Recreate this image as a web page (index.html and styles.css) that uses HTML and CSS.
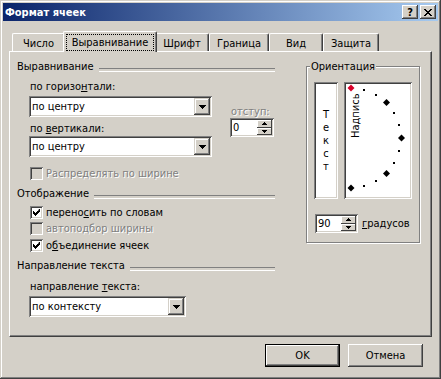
FILE: index.html
```html
<!DOCTYPE html>
<html lang="ru">
<head>
    <meta charset="UTF-8">
    <title>Формат ячеек</title>
    <link rel="stylesheet" href="styles.css">
</head>
<body>
    <div class="window">
        <!-- Title bar -->
        <div class="titlebar">
            <span class="title">Формат ячеек</span>
            <span class="caption-btn help">?</span>
            <span class="caption-btn">
                <svg width="8" height="7" viewBox="0 0 8 7"><path d="M0 0h2v1h1v1h2v-1h1v-1h2v1h-1v1h-1v1h-1v1h1v1h1v1h1v1h-2v-1h-1v-1h-2v1h-1v1h-2v-1h1v-1h1v-1h1v-1h-1v-1h-1v-1h-1z"/></svg>
            </span>
        </div>

        <div class="dialog">
            <div class="tabs">
                <div class="tab tab-number">Число</div>
                <div class="tab tab-align active"><span class="focus">Выравнивание</span></div>
                <div class="tab tab-font">Шрифт</div>
                <div class="tab tab-border">Граница</div>
                <div class="tab tab-view">Вид</div>
                <div class="tab tab-protect">Защита</div>
            </div>

            <div class="panel">
                <div class="left">
                    <div class="group-title">Выравнивание</div>
                    <div class="align-row">
                        <div class="align-fields">
                            <div class="label">по горизо<u>н</u>тали:</div>
                            <div class="combo combo-wide">
                                <span class="value">по центру</span>
                                <span class="drop"><svg width="7" height="4" viewBox="0 0 7 4"><path d="M0 0h7v1h-1v1h-1v1h-1v1h-1v-1h-1v-1h-1v-1h-1z"/></svg></span>
                            </div>
                            <div class="label label-second">по <u>в</u>ертикали:</div>
                            <div class="combo combo-wide combo-second">
                                <span class="value">по центру</span>
                                <span class="drop"><svg width="7" height="4" viewBox="0 0 7 4"><path d="M0 0h7v1h-1v1h-1v1h-1v1h-1v-1h-1v-1h-1v-1h-1z"/></svg></span>
                            </div>
                        </div>
                        <div class="indent">
                            <div class="label disabled">отступ:</div>
                            <div class="spin spin-indent">
                                <span class="value">0</span>
                                <span class="spin-btns">
                                    <span class="spin-btn"><svg width="5" height="3" viewBox="0 0 5 3"><path d="M2 0h1v1h1v1h1v1h-5v-1h1v-1h1z"/></svg></span>
                                    <span class="spin-btn"><svg width="5" height="3" viewBox="0 0 5 3"><path d="M0 0h5v1h-1v1h-1v1h-1v-1h-1v-1h-1z"/></svg></span>
                                </span>
                            </div>
                        </div>
                    </div>

                    <div class="check check-justify disabled">
                        <span class="box"></span>Распределять по ширине
                    </div>

                    <div class="group-title group-display">Отображение</div>
                    <div class="check check-wrap">
                        <span class="box"><svg width="7" height="7" viewBox="0 0 7 7"><path d="M6 0h1v3h-1v1h-1v1h-1v1h-1v1h-1v-1h-1v-1h-1v-3h1v1h1v1h1v-1h1v-1h1z"/></svg></span>
                        перено<u>с</u>ить по словам
                    </div>
                    <div class="check check-fit disabled">
                        <span class="box"></span>автоподбор ширины
                    </div>
                    <div class="check check-merge">
                        <span class="box"><svg width="7" height="7" viewBox="0 0 7 7"><path d="M6 0h1v3h-1v1h-1v1h-1v1h-1v1h-1v-1h-1v-1h-1v-3h1v1h1v1h1v-1h1v-1h1z"/></svg></span>
                        о<u>б</u>ъединение ячеек
                    </div>

                    <div class="group-title group-direction">Направление текста</div>
                    <div class="label label-direction">направление <u>т</u>екста:</div>
                    <div class="combo combo-narrow">
                        <span class="value">по контексту</span>
                        <span class="drop"><svg width="7" height="4" viewBox="0 0 7 4"><path d="M0 0h7v1h-1v1h-1v1h-1v1h-1v-1h-1v-1h-1v-1h-1z"/></svg></span>
                    </div>
                </div>

                <fieldset class="orient">
                    <legend>Ориентация</legend>
                    <div class="orient-boxes">
                        <div class="text-box">
                            <span>Т</span><span>е</span><span>к</span><span>с</span><span>т</span>
                        </div>
                        <div class="dial-box">
                            <svg class="dial" width="64" height="113" viewBox="0 0 64 113">
                                <text class="dial-text" transform="translate(13 54) rotate(-90)">Надпись</text>
                                <path fill="#d8002a" d="M5 0.5l3.5 3.5l-3.5 3.5l-3.5 -3.5z"/>
                                <rect x="17" y="5" width="2" height="2"/>
                                <rect x="29" y="10" width="2" height="2"/>
                                <path d="M40.5 15l3.5 3.5l-3.5 3.5l-3.5 -3.5z"/>
                                <rect x="47" y="28" width="2" height="2"/>
                                <rect x="52" y="40" width="2" height="2"/>
                                <path d="M55.5 50.5l3.5 3.5l-3.5 3.5l-3.5 -3.5z"/>
                                <rect x="52" y="66" width="2" height="2"/>
                                <rect x="47" y="78" width="2" height="2"/>
                                <path d="M40.5 86l3.5 3.5l-3.5 3.5l-3.5 -3.5z"/>
                                <rect x="29" y="96" width="2" height="2"/>
                                <rect x="17" y="101" width="2" height="2"/>
                                <path d="M5 100.5l3.5 3.5l-3.5 3.5l-3.5 -3.5z"/>
                            </svg>
                        </div>
                    </div>
                    <div class="deg-row">
                        <div class="spin spin-deg">
                            <span class="value">90</span>
                            <span class="spin-btns">
                                <span class="spin-btn"><svg width="5" height="3" viewBox="0 0 5 3"><path d="M2 0h1v1h1v1h1v1h-5v-1h1v-1h1z"/></svg></span>
                                <span class="spin-btn"><svg width="5" height="3" viewBox="0 0 5 3"><path d="M0 0h5v1h-1v1h-1v1h-1v-1h-1v-1h-1z"/></svg></span>
                            </span>
                        </div>
                        <span class="deg-label"><u>г</u>радусов</span>
                    </div>
                </fieldset>
            </div>

            <div class="buttons">
                <button type="button" class="btn default">OK</button>
                <button type="button" class="btn">Отмена</button>
            </div>
        </div>
    </div>
</body>
</html>
```

FILE: styles.css
```css
/* Reset */
* {
    margin: 0;
    padding: 0;
    box-sizing: border-box;
}

body {
    font-family: "DejaVu Sans Condensed", "DejaVu Sans", sans-serif;
    font-size: 11px;
    line-height: 13px;
    color: #000;
    background: #d4d0c8;
}

u {
    text-decoration: underline;
    text-underline-offset: 1px;
}

/* Window frame */
.window {
    width: 441px;
    height: 379px;
    padding: 3px;
    background: #d4d0c8;
    box-shadow: inset -1px -1px #404040, inset 1px 1px #d4d0c8, inset -2px -2px #808080, inset 2px 2px #fff;
}

.titlebar {
    height: 18px;
    display: flex;
    align-items: center;
    padding: 0 2px 0 2px;
    background: linear-gradient(to right, #0a246a, #a6caf0);
    color: #fff;
    font-weight: bold;
}

.title {
    flex: 1;
}

.caption-btn {
    width: 16px;
    height: 14px;
    display: flex;
    align-items: center;
    justify-content: center;
    background: #d4d0c8;
    color: #000;
    font-size: 11px;
    box-shadow: inset -1px -1px #404040, inset 1px 1px #fff, inset -2px -2px #808080;
}

.caption-btn.help {
    margin-right: 2px;
}

/* Tabs */
.dialog {
    padding: 0 6px;
}

.tabs {
    display: flex;
    align-items: flex-end;
    height: 20px;
    margin-top: 10px;
    padding-left: 3px;
}

.tab {
    height: 18px;
    display: flex;
    align-items: center;
    justify-content: center;
    padding-top: 1px;
    border-top: 1px solid #fff;
    border-left: 1px solid #fff;
    border-right: 1px solid #404040;
    border-radius: 2px 2px 0 0;
    box-shadow: inset -1px 0 #808080;
}

.tab-number { width: 53px; }
.tab-font { width: 54px; }
.tab-border { width: 60px; }
.tab-view { width: 54px; }
.tab-protect { width: 56px; }

.tab.active {
    width: 94px;
    height: 21px;
    margin: 0 -2px -1px;
    padding-top: 0;
    position: relative;
    z-index: 1;
    background: #d4d0c8;
}

.focus {
    padding: 1px 5px;
    border: 1px dotted #000;
}

/* Tab page */
.panel {
    height: 286px;
    display: flex;
    align-items: flex-start;
    padding: 8px 0 0 7px;
    border: 1px solid #fff;
    border-right-color: #404040;
    border-bottom-color: #404040;
    box-shadow: inset -1px -1px #808080;
}

.left {
    width: 258px;
}

.group-title {
    display: flex;
    gap: 5px;
    height: 13px;
}

.group-title::after {
    content: "";
    flex: 1;
    height: 2px;
    margin-top: 8px;
    border-top: 1px solid #808080;
    border-bottom: 1px solid #fff;
}

.group-display,
.group-direction {
    margin-top: 7px;
}

.label {
    padding-left: 1px;
    height: 13px;
}

.disabled {
    color: #808080;
    text-shadow: 1px 1px #fff;
}

.align-row {
    display: flex;
    margin-top: 7px;
    padding-left: 12px;
}

.label-second {
    margin-top: 5px;
}

.combo {
    display: flex;
    height: 21px;
    padding: 2px;
    margin-top: 3px;
    background: #fff;
    box-shadow: inset 1px 1px #808080, inset -1px -1px #fff, inset 2px 2px #404040, inset -2px -2px #d4d0c8;
}

.combo-wide {
    width: 183px;
}

.combo-second {
    margin-top: 1px;
}

.combo-narrow {
    width: 157px;
    margin-left: 12px;
}

.value {
    flex: 1;
    padding-left: 1px;
    line-height: 17px;
}

.drop {
    width: 16px;
    height: 17px;
    display: flex;
    align-items: center;
    justify-content: center;
    padding-top: 1px;
    background: #d4d0c8;
    box-shadow: inset -1px -1px #404040, inset 1px 1px #d4d0c8, inset -2px -2px #808080, inset 2px 2px #fff;
}

.indent {
    margin-left: 18px;
    padding-top: 25px;
}

.spin {
    display: flex;
    height: 19px;
    padding: 2px;
    background: #fff;
    box-shadow: inset 1px 1px #808080, inset -1px -1px #fff, inset 2px 2px #404040, inset -2px -2px #d4d0c8;
}

.spin .value {
    line-height: 15px;
}

.spin-indent {
    width: 44px;
}

.spin-btns {
    width: 15px;
    display: flex;
    flex-direction: column;
}

.spin-btn {
    flex: 1;
    display: flex;
    align-items: center;
    justify-content: center;
    background: #d4d0c8;
    box-shadow: inset -1px -1px #404040, inset 1px 1px #fff;
}

/* Checkboxes */
.check {
    display: flex;
    align-items: center;
    height: 13px;
    padding-left: 13px;
}

.check .box {
    width: 13px;
    height: 13px;
    margin-right: 3px;
    display: flex;
    align-items: center;
    justify-content: center;
    background: #fff;
    box-shadow: inset 1px 1px #808080, inset -1px -1px #fff, inset 2px 2px #404040, inset -2px -2px #d4d0c8;
}

.check.disabled .box {
    background: #d4d0c8;
}

.check-justify {
    margin-top: 10px;
}

.check-wrap {
    margin-top: 6px;
}

.check-fit {
    margin-top: 3px;
}

.check-merge {
    margin-top: 4px;
}

.label-direction {
    margin-top: 8px;
    margin-left: 12px;
}

/* Orientation */
.orient {
    width: 114px;
    margin-left: 31px;
    padding: 9px 7px 9px 7px;
    border: 1px solid #808080;
    box-shadow: 1px 1px #fff, inset 1px 1px #fff;
}

.orient legend {
    margin-left: -4px;
    padding: 0 1px;
    background: #d4d0c8;
}

.orient-boxes {
    display: flex;
    gap: 6px;
}

.text-box,
.dial-box {
    height: 117px;
    padding: 2px;
    background: #fff;
    box-shadow: inset 1px 1px #808080, inset -1px -1px #fff, inset 2px 2px #404040, inset -2px -2px #d4d0c8;
}

.text-box {
    width: 24px;
    display: flex;
    flex-direction: column;
    align-items: center;
    justify-content: center;
}

.dial-box {
    width: 68px;
}

.dial {
    display: block;
}

.dial-text {
    font-size: 11px;
}

.deg-row {
    display: flex;
    align-items: center;
    margin-top: 15px;
    padding-left: 1px;
}

.spin-deg {
    width: 43px;
}

.deg-label {
    margin-left: 4px;
}

/* Buttons */
.buttons {
    display: flex;
    justify-content: flex-end;
    gap: 8px;
    margin-top: 7px;
    padding-right: 9px;
}

.btn {
    width: 75px;
    height: 23px;
    font: inherit;
    color: #000;
    background: #d4d0c8;
    border: none;
    box-shadow: inset -1px -1px #404040, inset 1px 1px #fff, inset -2px -2px #808080, inset 2px 2px #d4d0c8;
}

.btn.default {
    border: 1px solid #000;
}
```
